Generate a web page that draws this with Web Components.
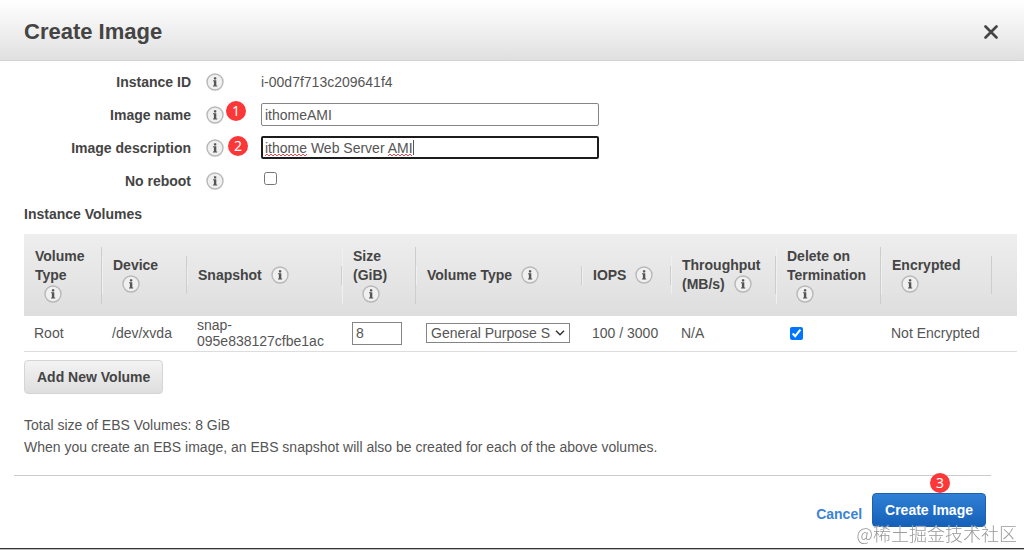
<!DOCTYPE html>
<html lang="en">
<head>
<meta charset="UTF-8">
<meta name="viewport" content="width=device-width, initial-scale=1.0">
<title>Create Image</title>
<style>
    :root {
        --text: #444;
        --text-soft: #555;
        --line: #ccc;
        --field-border: #858585;
        --badge: #fb3737;
        --link: #3b83d3;
    }
    body {
        margin: 0;
        background: #fff;
        color: var(--text-soft);
        font: 14px/16px "Liberation Sans", Arial, sans-serif;
    }
</style>
</head>
<body>
<image-dialog heading="Create Image">
    <form-row label="Instance ID" value="i-00d7f713c209641f4"></form-row>
    <form-row label="Image name" type="text" value="ithomeAMI">
        <step-badge slot="badge" style="left: 20px; top: -5px">1</step-badge>
    </form-row>
    <form-row label="Image description" type="text" value="ithome Web Server AMI" active>
        <step-badge slot="badge" style="left: 22px; top: -3px">2</step-badge>
    </form-row>
    <form-row label="No reboot" type="checkbox"></form-row>
    <volume-table></volume-table>
    <dialog-actions slot="footer">
        <step-badge slot="badge" style="left: 58px; top: -20px">3</step-badge>
    </dialog-actions>
</image-dialog>
<water-mark>@稀土掘金技术社区</water-mark>

<script>
class BaseElement extends HTMLElement {
    constructor() {
        super();
        this.attachShadow({ mode: "open" });
    }
    connectedCallback() {
        const template = document.createElement('template');
        template.innerHTML = `<style>* { box-sizing: border-box; }${this.getStyles()}</style>${this.getTemplate()}`;
        this.shadowRoot.replaceChildren(template.content.cloneNode(true));
    }
}

class InfoIcon extends BaseElement {
    getTemplate() {
        return `
            <svg viewBox="0 0 18 18" width="18" height="18" aria-hidden="true">
                <circle cx="9" cy="9" r="8" fill="#f0f0f0" stroke="#b8b8b8" stroke-width="1.4"/>
                <rect x="7.9" y="4.2" width="2.4" height="2.2" rx=".6" fill="#555"/>
                <path d="M7 7.3H10.3V12.6H11.2V13.6H7V12.6H7.9V8.3H7Z" fill="#555"/>
            </svg>
        `;
    }
    getStyles() {
        return `
            :host { display: inline-block; width: 18px; height: 18px; }
            svg { display: block; }
        `;
    }
}

class StepBadge extends BaseElement {
    getTemplate() {
        return `<slot></slot>`;
    }
    getStyles() {
        return `
            :host {
                position: absolute;
                width: 20px;
                height: 20px;
                border-radius: 50%;
                background: var(--badge);
                color: #fff;
                font: 14px/20px "Noto Sans", sans-serif;
                text-align: center;
            }
        `;
    }
}

class FormRow extends BaseElement {
    getControl() {
        const type = this.getAttribute('type');
        const value = this.getAttribute('value') || '';
        if (type === 'checkbox') return `<input id="control" type="checkbox">`;
        if (type === 'text') {
            return `<input id="control" type="text" value="${value}" spellcheck="false">${this.getMarks()}`;
        }
        return `<output id="control">${value}</output>`;
    }
    // caret and spelling marks of the field being edited
    getMarks() {
        if (!this.hasAttribute('active')) return '';
        const wave = (from, to) => {
            let d = `M${from} 3`;
            for (let x = from + 2, up = true; x <= to; x += 2, up = !up) d += `L${x} ${up ? 1 : 3}`;
            return `<path d="${d}"/>`;
        };
        return `
            <svg class="marks" width="160" height="4" fill="none" stroke="#e05050" aria-hidden="true">
                ${wave(4, 46)}${wave(127, 151)}
            </svg>
            <span class="caret"></span>
        `;
    }
    getTemplate() {
        return `
            <label for="control">${this.getAttribute('label')}</label>
            <div class="info"><info-icon></info-icon><slot name="badge"></slot></div>
            <div class="field">${this.getControl()}</div>
        `;
    }
    getStyles() {
        return `
            :host {
                display: grid;
                grid-template-columns: 191px 18px 338px;
                column-gap: 15px;
                align-items: center;
                height: 33px;
            }
            label { color: var(--text); font-weight: bold; text-align: right; }
            .info { position: relative; height: 18px; }
            .field { position: relative; display: flex; align-items: center; margin-left: 22px; width: 338px; }
            input[type="text"] {
                width: 100%;
                height: 23px;
                padding: 0 3px;
                border: 1px solid var(--field-border);
                border-radius: 2px;
                color: inherit;
                font: inherit;
                outline: none;
            }
            :host([active]) input { padding: 0 2px; border: 2px solid #1c1c1c; }
            input[type="checkbox"] { width: 13px; height: 13px; margin: 0 3px 4px; }
            .marks { position: absolute; left: 0; bottom: 2px; }
            .caret { position: absolute; left: 152px; top: 4px; width: 1px; height: 15px; background: #555; }
        `;
    }
}

class VolumeTable extends BaseElement {
    getTemplate() {
        const columns = [
            ['Volume Type', 78], ['Device', 85], ['Snapshot', 155], ['Size (GiB)', 74], ['Volume Type', 166],
            ['IOPS', 89], ['Throughput (MB/s)', 105], ['Delete on Termination', 105], ['Encrypted', 111]
        ];
        return `
            <h2>Instance Volumes</h2>
            <table>
                <colgroup>${columns.map(([, width]) => `<col style="width: ${width}px">`).join('')}<col style="width: 25px"></colgroup>
                <thead>
                    <tr>
                        ${columns.map(([name]) => `<th scope="col"><div>${name}<wbr><info-icon></info-icon></div></th>`).join('')}
                        <td></td>
                    </tr>
                </thead>
                <tbody>
                    <tr>
                        <td>Root</td>
                        <td>/dev/xvda</td>
                        <td>snap-<br>095e838127cfbe1ac</td>
                        <td><input type="text" value="8" aria-label="Size (GiB)"></td>
                        <td><select aria-label="Volume Type"><option>General Purpose SSD (gp2)</option></select></td>
                        <td>100 / 3000</td>
                        <td>N/A</td>
                        <td><input type="checkbox" checked aria-label="Delete on Termination"></td>
                        <td>Not Encrypted</td>
                        <td></td>
                    </tr>
                </tbody>
            </table>
            <button type="button">Add New Volume</button>
            <p>Total size of EBS Volumes: 8 GiB</p>
            <p>When you create an EBS image, an EBS snapshot will also be created for each of the above volumes.</p>
        `;
    }
    getStyles() {
        return `
            :host { display: block; padding: 8px 7px 17px 24px; }
            h2 { margin: 0 0 11px; color: var(--text); font-size: 14px; line-height: 18px; }
            table { width: 100%; border-collapse: collapse; table-layout: fixed; }
            thead tr { height: 82px; background: linear-gradient(#eee, #dedede); }
            th { padding: 0; color: var(--text); line-height: 19px; text-align: left; }
            th div { padding: 0 10px; border-left: 1px solid #f0f0f0; border-right: 1px solid #cdcdcd; }
            th:first-child div { border-left-color: transparent; }
            th info-icon { margin-left: 9px; vertical-align: -4px; }
            tbody tr { height: 35px; border-bottom: 1px solid #ddd; }
            td { padding: 0 0 0 10px; white-space: nowrap; }
            td input, td select { color: inherit; font: inherit; border: 1px solid var(--field-border); }
            td input[type="text"] { display: block; width: 50px; height: 23px; padding: 0 3px; }
            td input[type="checkbox"] { display: block; width: 13px; height: 13px; margin: 0 4px; }
            select {
                display: block;
                width: 144px;
                height: 20px;
                padding: 0 4px;
                border-radius: 0;
                background: #fff url('data:image/svg+xml,<svg xmlns="http://www.w3.org/2000/svg" width="10" height="6" fill="none" stroke="%23333" stroke-width="1.5"><path d="M1 .8L5 4.8L9 .8"/></svg>') no-repeat right 4px center;
                appearance: none;
            }
            td select { padding-right: 18px; }
            button {
                display: block;
                height: 34px;
                margin: 8px 0 20px;
                padding: 0 12px;
                border: 1px solid #d5d5d5;
                border-radius: 4px;
                background: linear-gradient(#f3f3f3, #dedede);
                color: var(--text);
                font: bold 14px/16px "Liberation Sans", Arial, sans-serif;
            }
            p { margin: 0; line-height: 22px; }
        `;
    }
}

class DialogActions extends BaseElement {
    getTemplate() {
        return `
            <a href="#">Cancel</a>
            <div><button type="button">Create Image</button><slot name="badge"></slot></div>
        `;
    }
    getStyles() {
        return `
            :host { display: flex; justify-content: flex-end; align-items: center; gap: 10px; padding: 17px 38px 20px; }
            a { padding-top: 8px; color: var(--link); font-weight: bold; text-decoration: none; }
            div { position: relative; }
            button {
                display: block;
                height: 34px;
                padding: 0 12px;
                border: 1px solid #1c61b0;
                border-radius: 4px;
                background: linear-gradient(#2f80d6, #1560b8);
                color: #fff;
                font: bold 14px/16px "Liberation Sans", Arial, sans-serif;
            }
        `;
    }
}

class ImageDialog extends BaseElement {
    getTemplate() {
        return `
            <header>
                <h1>${this.getAttribute('heading')}</h1>
                <button type="button" aria-label="Close">
                    <svg viewBox="0 0 14 14" width="14" height="14" stroke="#444" stroke-width="2.6" stroke-linecap="round">
                        <path d="M1.5 1.5L12.5 12.5M12.5 1.5L1.5 12.5"/>
                    </svg>
                </button>
            </header>
            <main><slot></slot></main>
            <footer><slot name="footer"></slot></footer>
        `;
    }
    getStyles() {
        return `
            :host {
                display: flex;
                flex-direction: column;
                box-sizing: border-box;
                min-height: 100vh;
                border-bottom: 1px solid #bbb;
                box-shadow: inset 0 -1px #333;
            }
            header {
                display: flex;
                justify-content: space-between;
                align-items: center;
                height: 61px;
                padding: 3px 26px 0 24px;
                border-bottom: 1px solid #d3d3d3;
                background: linear-gradient(#fff, #e0e0e0);
            }
            h1 { margin: 0; color: var(--text); font-size: 22px; line-height: 26px; }
            button { display: flex; padding: 0; border: 0; background: none; }
            main { padding-top: 4px; }
            footer { position: relative; }
            footer::before { content: ""; display: block; margin: 0 33px 0 14px; border-top: 1px solid var(--line); }
        `;
    }
}

class WaterMark extends BaseElement {
    getTemplate() {
        return `<slot></slot>`;
    }
    getStyles() {
        return `
            :host {
                position: fixed;
                right: 7px;
                bottom: 5px;
                color: #999;
                font: 300 18px/24px "Noto Sans CJK SC", sans-serif;
                text-shadow: 0 0 1px #fff;
                pointer-events: none;
            }
        `;
    }
}

customElements.define("info-icon", InfoIcon);
customElements.define("step-badge", StepBadge);
customElements.define("form-row", FormRow);
customElements.define("volume-table", VolumeTable);
customElements.define("dialog-actions", DialogActions);
customElements.define("image-dialog", ImageDialog);
customElements.define("water-mark", WaterMark);
</script>
</body>
</html>
